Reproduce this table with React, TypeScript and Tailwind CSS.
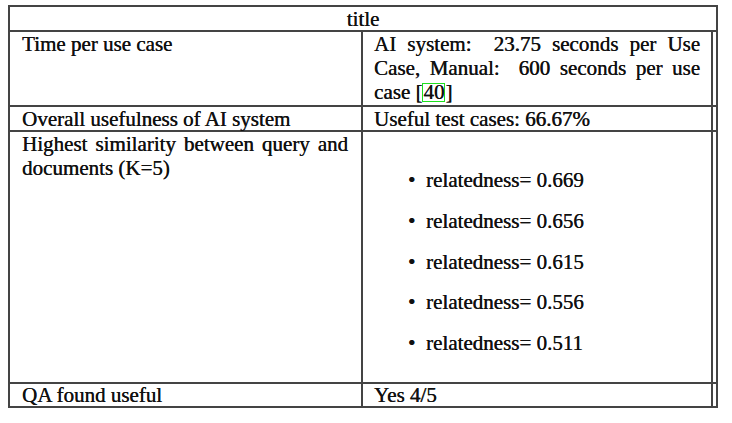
const Bullet = ({ value }: { value: string }) => {
  return (
    <div className="flex h-[24px] items-center pl-[45px]">
      <span className="inline-block w-[18px]">•</span>
      <span>relatedness= {value}</span>
    </div>
  );
};

const App = () => {
  const values = ["0.669", "0.656", "0.615", "0.556", "0.511"];
  return (
    <div className="min-h-screen bg-white pt-[5px] pl-[8px] font-['Liberation_Serif',serif] text-[21px] leading-[24px] text-[#111] [text-shadow:0.35px_0_0_#111]">
      <div className="w-[710px] border-2 border-[#444]">
        <div className="flex h-[25px] items-center justify-center border-b-2 border-[#444]">title</div>

        <div className="flex h-[75px] border-b-2 border-[#444]">
          <div className="w-[351px] pl-[12px]">Time per use case</div>
          <div className="mr-[3px] flex-1 border-x-2 border-[#444] px-[11px] text-justify">
            AI system:&nbsp; 23.75 seconds per Use Case, Manual:&nbsp; 600 seconds per use case{" "}
            <span className="whitespace-nowrap">
              [<span className="inline-block border border-[#1ee01e] leading-[17px]">40</span>]
            </span>
          </div>
        </div>

        <div className="flex h-[25px] border-b-2 border-[#444]">
          <div className="flex w-[351px] items-center pl-[12px]">Overall usefulness of AI system</div>
          <div className="mr-[3px] flex flex-1 items-center border-x-2 border-[#444] px-[11px]">
            Useful test cases: 66.67%
          </div>
        </div>

        <div className="flex h-[252px] border-b-2 border-[#444]">
          <div className="w-[351px] pl-[12px] pr-[13px] text-justify">
            Highest similarity between query and documents (K=5)
          </div>
          <div className="mr-[3px] flex flex-1 flex-col gap-[16.75px] border-x-2 border-[#444] pt-[36px]">
            {values.map((v) => (
              <Bullet key={v} value={v} />
            ))}
          </div>
        </div>

        <div className="flex h-[22px]">
          <div className="flex w-[351px] items-center pl-[12px]">QA found useful</div>
          <div className="mr-[3px] flex flex-1 items-center border-x-2 border-[#444] px-[11px]">Yes 4/5</div>
        </div>
      </div>
    </div>
  );
};

export default App;
